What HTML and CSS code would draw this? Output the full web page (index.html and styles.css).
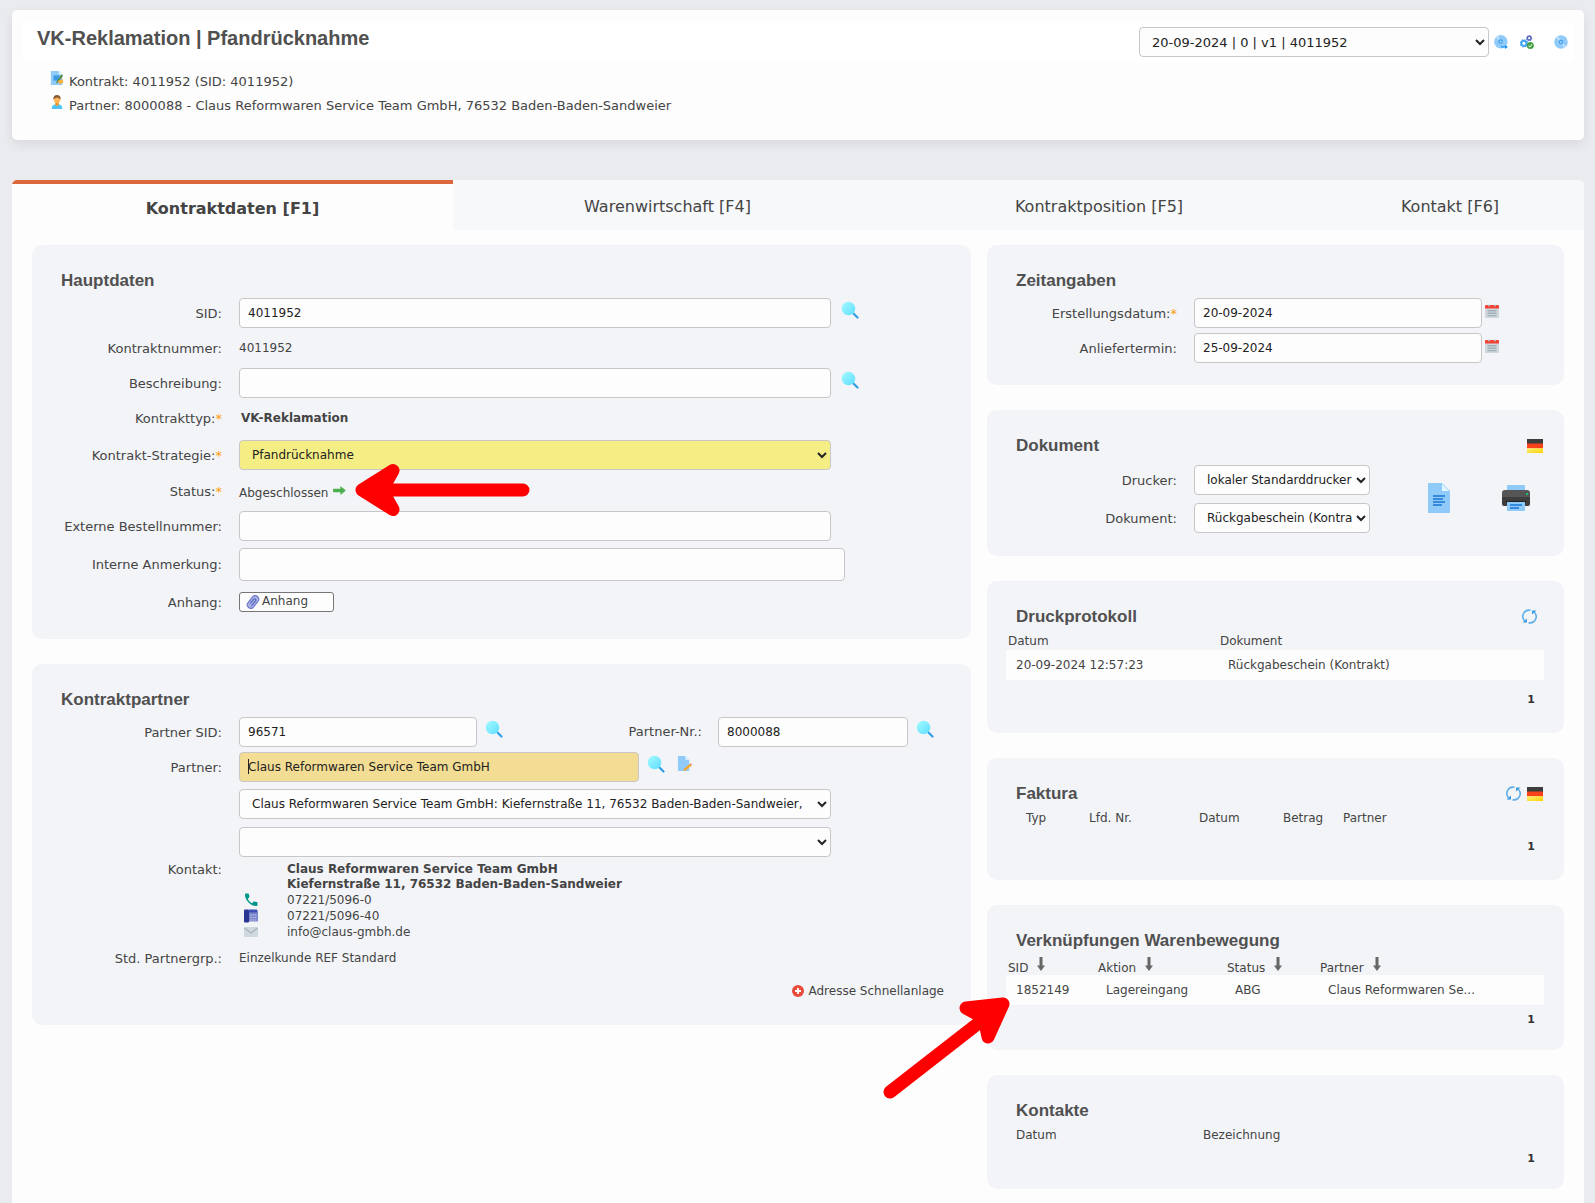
FILE: index.html
```html
<!DOCTYPE html>
<html lang="de">
<head>
<meta charset="utf-8">
<meta name="viewport" content="width=device-width, initial-scale=1">
<title>VK-Reklamation | Pfandrücknahme</title>
<link rel="stylesheet" href="styles.css">
</head>
<body>
<svg class="sprite" aria-hidden="true">
  <defs>
    <linearGradient id="lens" x1="0" y1="0" x2="1" y2="1"><stop offset="0" stop-color="#a4fbff"/><stop offset="1" stop-color="#5fdcff"/></linearGradient>
    <linearGradient id="gold" x1="0" y1="0" x2="1" y2="1"><stop offset="0" stop-color="#fff27a"/><stop offset="1" stop-color="#ffcf00"/></linearGradient>
    <symbol id="i-search" viewBox="0 0 18 18"><path d="M11.500 11.500l5 5" stroke="#2f9fe6" stroke-width="2.200" stroke-linecap="round"/><circle cx="7.500" cy="7.500" r="6.800" fill="url(#lens)"/></symbol>
    <symbol id="i-contract" viewBox="0 0 16 16"><path d="M1 0h9l4 4v12H1z" fill="#90caf9"/><path d="M10 0l4 4h-4z" fill="#e1f5fe"/><path d="M4 5h7v6H4z" fill="#3d9ae8"/><path d="M13 4l2 1.500-6 8-2 .5.500-2z" fill="#5b8a3c"/><path d="M9 11l6-1.500v4l-4 1.500z" fill="#fbb03b"/></symbol>
    <symbol id="i-person" viewBox="0 0 16 16"><path d="M2 16c0-4 2-5.500 6-5.500s6 1.500 6 5.500z" fill="#4fc3f7"/><path d="M6 8h4v3l-2 2-2-2z" fill="#f29a2e"/><circle cx="8" cy="5" r="3.800" fill="#ffb75a"/><path d="M3.800 5C3.500 1.500 5.500 0 8 0s4.500 1.500 4.200 5C11 3.500 9 3 8 3S5 3.500 3.800 5z" fill="#8a5a35"/></symbol>
    <symbol id="i-disc" viewBox="0 0 16 16"><circle cx="8" cy="8" r="7.800" fill="#90caf9"/><path d="M8 8L2 3.500A7.500 7.500 0 0 1 5 1zM8 8l6 4.500A7.500 7.500 0 0 1 11 15z" fill="#bbdefb"/><circle cx="8" cy="8" r="2.600" fill="#42a0ee"/><circle cx="8" cy="8" r="1" fill="#d5ecff"/></symbol>
    <symbol id="i-disc-go" viewBox="0 0 16 16"><circle cx="7.800" cy="7.800" r="7.700" fill="#90caf9"/><path d="M7.500 7.500L2 3.200A7.300 7.300 0 0 1 5 .700z" fill="#bbdefb"/><circle cx="7.500" cy="7.500" r="2.600" fill="#42a0ee"/><circle cx="7.500" cy="7.500" r="1" fill="#d5ecff"/><path d="M8 12.800h4.500V11l3.500 2.800-3.500 2.200v-1.700H8z" fill="#2196f3"/></symbol>
    <symbol id="i-gears" viewBox="0 0 16 16"><circle cx="4.500" cy="9.500" r="3" fill="none" stroke="#42a5f5" stroke-width="2.200"/><circle cx="4.500" cy="9.500" r="4.200" fill="none" stroke="#42a5f5" stroke-width="1.200" stroke-dasharray="1.650 1.650"/><circle cx="10.500" cy="3.600" r="2.100" fill="none" stroke="#5c6bc0" stroke-width="1.800"/><circle cx="10.500" cy="3.600" r="3.100" fill="none" stroke="#5c6bc0" stroke-width="1" stroke-dasharray="1.200 1.200"/><circle cx="11.800" cy="12" r="4" fill="#43a047"/><path d="M9.800 12l1.500 1.500 2.600-2.800" fill="none" stroke="#dcedc8" stroke-width="1.200"/></symbol>
    <symbol id="i-go" viewBox="0 0 14 12"><path d="M0 4.200h8V1l6 5-6 5V7.800H0z" fill="#4caf50"/></symbol>
    <symbol id="i-clip" viewBox="0 0 14 14"><g transform="rotate(38 7 7)"><rect x="3.500" y="0" width="7" height="14" rx="3.500" fill="#a9b3e8" stroke="#6f7ccb" stroke-width="1.200"/><path d="M5.800 10V4.500a1.200 1.200 0 0 1 2.400 0V11" fill="none" stroke="#5c6bc0" stroke-width="1.200"/></g></symbol>
    <symbol id="i-edit" viewBox="0 0 16 16"><path d="M1 0h8l4 4v12H1z" fill="#90caf9"/><path d="M9 0l4 4H9z" fill="#e1f5fe"/><path d="M13.500 8.500l1.800 1.800-6 5-2.300.700.500-2.300z" fill="#f5a623"/><path d="M13.500 8.500l1-.8 1.500 1.500-.7 1.100z" fill="#e57373"/></symbol>
    <symbol id="i-calendar" viewBox="0 0 14 14"><path d="M0 4h14v10H0z" fill="#cfd8dc"/><path d="M0 4.500V2a1 1 0 0 1 1-1h12a1 1 0 0 1 1 1v2.500z" fill="#f44336"/><circle cx="4" cy="1.500" r="1" fill="#b0bec5"/><circle cx="10" cy="1.500" r="1" fill="#b0bec5"/><path d="M2.500 6.800h9M2.500 9.200h9M2.500 11.600h9" stroke="#9fb0b8" stroke-width="1.400"/></symbol>
    <symbol id="i-flag" viewBox="0 0 16 14"><path d="M0 0h16v5H0z" fill="#3c3c3c"/><path d="M0 4.500h16v5H0z" fill="#f9411c"/><path d="M0 9.200h16V14H0z" fill="url(#gold)"/></symbol>
    <symbol id="i-doc" viewBox="0 0 22 30"><path d="M0 0h14l8 8v22H0z" fill="#90caf9"/><path d="M14 1l7 7h-7z" fill="#e1f5fe"/><path d="M5 13h12M5 16h10M5 19h12M5 22h9" stroke="#1976d2" stroke-width="1.500"/></symbol>
    <symbol id="i-printer" viewBox="0 0 28 26"><path d="M5 0h18v7H5z" fill="#90caf9"/><path d="M3 5h22a3 3 0 0 1 3 3v5H0V8a3 3 0 0 1 3-3z" fill="#555"/><path d="M0 12h28v7a2 2 0 0 1-2 2H2a2 2 0 0 1-2-2z" fill="#3d3d3d"/><circle cx="25" cy="9" r="1" fill="#00e676"/><path d="M4 16h20v2H4z" fill="#222"/><path d="M5 17h18v9H5z" fill="#90caf9"/><path d="M8 20h12M8 23h9" stroke="#1976d2" stroke-width="1.300"/></symbol>
    <symbol id="i-refresh" viewBox="0 0 15 15"><path d="M8.500 1.300A6.200 6.200 0 0 0 3 12M6.500 13.700A6.200 6.200 0 0 0 12 3" fill="none" stroke="#5fb0ea" stroke-width="1.600"/><path d="M.5 13.500h4.500V9.500zM14.500 1.500H10v4z" fill="#3a9be0"/></symbol>
    <symbol id="i-phone" viewBox="0 0 14 14"><path d="M1 1.500C1 .8 1.500.5 2 .5h2c.6 0 .9.300 1 .9l.400 2.200c0 .4-.1.700-.4 1L3.800 6c1 1.900 2.300 3.200 4.200 4.200l1.400-1.300c.3-.3.600-.4 1-.3l2.300.4c.5.100.8.400.8 1v2c0 .700-.4 1-1 1C6.500 13 1 7.500 1 1.500z" fill="#009688"/></symbol>
    <symbol id="i-fax" viewBox="0 0 14 13"><path d="M3 1h11v11H3z" fill="#7986cb"/><path d="M5 0h8v3H5z" fill="#3f51b5"/><rect x="0" y="0" width="5" height="13" rx="1" fill="#283593"/><path d="M6.500 5.500h6M6.500 8h6M6.500 10.500h6" stroke="#c5cae9" stroke-width="1.200" stroke-dasharray="1.400 .8"/></symbol>
    <symbol id="i-mail" viewBox="0 0 14 10"><rect width="14" height="10" rx="1" fill="#cfd8dc"/><path d="M.5 1L7 6l6.500-5" fill="none" stroke="#a3b2ba" stroke-width="1.200"/></symbol>
    <symbol id="i-plus" viewBox="0 0 12 12"><circle cx="6" cy="6" r="6" fill="#e74c3c"/><path d="M6 3v6M3 6h6" stroke="#fff" stroke-width="1.800"/></symbol>
    <symbol id="i-sort" viewBox="0 0 8 14"><path d="M2.500 0h3v8.500H8L4 14 0 8.500h2.500z" fill="#666"/></symbol>
  </defs>
</svg>

<header class="top">
  <div class="top-bar">
    <h1>VK-Reklamation | Pfandrücknahme</h1>
    <div class="top-tools">
      <select class="control" aria-label="Version"><option>20-09-2024 | 0 | v1 | 4011952</option></select>
      <button class="icon-btn" aria-label="Speichern und weiter"><svg class="i14"><use href="#i-disc-go"/></svg></button>
      <button class="icon-btn" aria-label="Verarbeiten"><svg class="i14"><use href="#i-gears"/></svg></button>
      <button class="icon-btn save" aria-label="Speichern"><svg class="i14"><use href="#i-disc"/></svg></button>
    </div>
  </div>
  <p class="info"><svg class="i14"><use href="#i-contract"/></svg>Kontrakt: 4011952 (SID: 4011952)</p>
  <p class="info"><svg class="i14"><use href="#i-person"/></svg>Partner: 8000088 - Claus Reformwaren Service Team GmbH, 76532 Baden-Baden-Sandweier</p>
</header>

<main class="sheet">
  <nav class="tabs">
    <a class="tab active" href="#kontraktdaten">Kontraktdaten [F1]</a>
    <a class="tab" href="#warenwirtschaft">Warenwirtschaft [F4]</a>
    <a class="tab" href="#kontraktposition">Kontraktposition [F5]</a>
    <a class="tab" href="#kontakt">Kontakt [F6]</a>
  </nav>

  <div class="columns" id="kontraktdaten">
    <div class="column">
      <section class="panel">
        <div class="panel-head"><h2>Hauptdaten</h2></div>
        <div class="row">
          <label for="sid">SID:</label>
          <div class="field wide"><input class="control" id="sid" value="4011952"><button class="icon-btn lift" aria-label="SID suchen"><svg class="i18"><use href="#i-search"/></svg></button></div>
        </div>
        <div class="row"><span class="label">Kontraktnummer:</span><span>4011952</span></div>
        <div class="row">
          <label for="beschreibung">Beschreibung:</label>
          <div class="field wide"><input class="control" id="beschreibung"><button class="icon-btn lift" aria-label="Beschreibung suchen"><svg class="i18"><use href="#i-search"/></svg></button></div>
        </div>
        <div class="row"><span class="label">Kontrakttyp:<i>*</i></span><b class="type">VK-Reklamation</b></div>
        <div class="row tall">
          <label for="strategie">Kontrakt-Strategie:<i>*</i></label>
          <div class="field wide"><select class="control yellow" id="strategie"><option>Pfandrücknahme</option></select></div>
        </div>
        <div class="row">
          <span class="label">Status:<i>*</i></span>
          <div class="status">Abgeschlossen <button class="icon-btn" aria-label="Nächster Status"><svg class="i-go"><use href="#i-go"/></svg></button>
            <svg class="pointer-left" viewBox="0 0 176 54" aria-hidden="true"><path d="M7 27L38 7.500 27 27 38 46.500zM7 27H168"/></svg>
          </div>
        </div>
        <div class="row">
          <label for="extern">Externe Bestellnummer:</label>
          <div class="field wide"><input class="control" id="extern"></div>
        </div>
        <div class="row note">
          <label for="anmerkung">Interne Anmerkung:</label>
          <div class="field wider"><textarea class="control" id="anmerkung" rows="1"></textarea></div>
        </div>
        <div class="row"><span class="label">Anhang:</span><div class="field"><button class="attach"><svg class="i14"><use href="#i-clip"/></svg>Anhang</button></div></div>
      </section>

      <section class="panel">
        <div class="panel-head"><h2>Kontraktpartner</h2></div>
        <div class="row">
          <label for="partner-sid">Partner SID:</label>
          <div class="field pair">
            <input class="control" id="partner-sid" value="96571">
            <div class="pair-mid"><button class="icon-btn lift" aria-label="Partner SID suchen"><svg class="i18"><use href="#i-search"/></svg></button><label for="partner-nr">Partner-Nr.:</label></div>
            <input class="control" id="partner-nr" value="8000088">
            <button class="icon-btn lift near" aria-label="Partner-Nr. suchen"><svg class="i18"><use href="#i-search"/></svg></button>
          </div>
        </div>
        <div class="row">
          <label for="partner">Partner:</label>
          <div class="field partner">
            <input class="control amber" id="partner" value="Claus Reformwaren Service Team GmbH">
            <div class="actions lift near"><button class="icon-btn" aria-label="Partner suchen"><svg class="i18"><use href="#i-search"/></svg></button><button class="icon-btn" aria-label="Partner bearbeiten"><svg class="i15"><use href="#i-edit"/></svg></button></div>
          </div>
        </div>
        <div class="row tall"><span></span>
          <div class="field wide"><select class="control" aria-label="Adresse"><option>Claus Reformwaren Service Team GmbH: Kiefernstraße 11, 76532 Baden-Baden-Sandweier,</option></select></div>
        </div>
        <div class="row tall"><span></span>
          <div class="field wide"><select class="control" aria-label="Ansprechpartner"><option></option></select></div>
        </div>
        <div class="row contact">
          <span class="label">Kontakt:</span>
          <address>
            <span></span><b>Claus Reformwaren Service Team GmbH</b>
            <span></span><b>Kiefernstraße 11, 76532 Baden-Baden-Sandweier</b>
            <svg class="i14"><use href="#i-phone"/></svg><span>07221/5096-0</span>
            <svg class="i14"><use href="#i-fax"/></svg><span>07221/5096-40</span>
            <svg class="i14"><use href="#i-mail"/></svg><span>info@claus-gmbh.de</span>
          </address>
        </div>
        <div class="row"><span class="label">Std. Partnergrp.:</span><span>Einzelkunde REF Standard</span></div>
        <a class="quick" href="#adresse"><svg class="i12"><use href="#i-plus"/></svg>Adresse Schnellanlage</a>
      </section>
    </div>

    <div class="column">
      <section class="panel">
        <div class="panel-head"><h2>Zeitangaben</h2></div>
        <div class="row">
          <label for="erstellt">Erstellungsdatum:<i>*</i></label>
          <div class="field date"><input class="control" id="erstellt" value="20-09-2024"><button class="icon-btn" aria-label="Erstellungsdatum wählen"><svg class="i14"><use href="#i-calendar"/></svg></button></div>
        </div>
        <div class="row">
          <label for="termin">Anliefertermin:</label>
          <div class="field date"><input class="control" id="termin" value="25-09-2024"><button class="icon-btn" aria-label="Anliefertermin wählen"><svg class="i14"><use href="#i-calendar"/></svg></button></div>
        </div>
      </section>

      <section class="panel">
        <div class="panel-head"><h2>Dokument</h2><button class="icon-btn" aria-label="Sprache Deutsch"><svg class="i-flag"><use href="#i-flag"/></svg></button></div>
        <div class="print">
          <div>
            <div class="row tall"><label for="drucker">Drucker:</label><select class="control" id="drucker"><option>lokaler Standarddrucker</option></select></div>
            <div class="row tall"><label for="dokument">Dokument:</label><select class="control" id="dokument"><option>Rückgabeschein (Kontrakt)</option></select></div>
          </div>
          <div class="print-actions">
            <button class="icon-btn" aria-label="Vorschau"><svg class="i-doc"><use href="#i-doc"/></svg></button>
            <button class="icon-btn" aria-label="Drucken"><svg class="i-printer"><use href="#i-printer"/></svg></button>
          </div>
        </div>
      </section>

      <section class="panel">
        <div class="panel-head"><h2>Druckprotokoll</h2><button class="icon-btn inset" aria-label="Aktualisieren"><svg class="i15"><use href="#i-refresh"/></svg></button></div>
        <table class="list log">
          <thead><tr><th class="c-date">Datum</th><th>Dokument</th></tr></thead>
          <tbody><tr><td>20-09-2024 12:57:23</td><td>Rückgabeschein (Kontrakt)</td></tr></tbody>
        </table>
        <div class="pager">1</div>
      </section>

      <section class="panel">
        <div class="panel-head"><h2>Faktura</h2><button class="icon-btn" aria-label="Aktualisieren"><svg class="i15"><use href="#i-refresh"/></svg></button><button class="icon-btn" aria-label="Sprache Deutsch"><svg class="i-flag"><use href="#i-flag"/></svg></button></div>
        <table class="list invoices">
          <thead><tr><th class="c-typ">Typ</th><th class="c-nr">Lfd. Nr.</th><th class="c-day">Datum</th><th class="c-sum">Betrag</th><th>Partner</th></tr></thead>
        </table>
        <div class="pager">1</div>
      </section>

      <section class="panel">
        <div class="panel-head"><h2>Verknüpfungen Warenbewegung</h2></div>
        <table class="list links">
          <thead><tr><th class="c-sid">SID<svg class="i-sort"><use href="#i-sort"/></svg></th><th class="c-act">Aktion<svg class="i-sort"><use href="#i-sort"/></svg></th><th class="c-stat">Status<svg class="i-sort"><use href="#i-sort"/></svg></th><th>Partner<svg class="i-sort"><use href="#i-sort"/></svg></th></tr></thead>
          <tbody><tr><td>1852149</td><td>Lagereingang</td><td>ABG</td><td>Claus Reformwaren Se...</td></tr></tbody>
        </table>
        <div class="pager short">1</div>
        <svg class="pointer-up" viewBox="0 0 130 110" aria-hidden="true"><path d="M120 11L83 15 101 25 105 44zM120 11L7 99"/></svg>
      </section>

      <section class="panel">
        <div class="panel-head"><h2>Kontakte</h2></div>
        <table class="list contacts">
          <thead><tr><th class="c-when">Datum</th><th>Bezeichnung</th></tr></thead>
        </table>
        <div class="pager short">1</div>
      </section>
    </div>
  </div>
</main>
</body>
</html>
```
FILE: styles.css
```css
* {
  box-sizing: border-box;
}

body {
  display: flex;
  flex-direction: column;
  min-height: 100vh;
  margin: 0;
  padding: 10px 11px 0 12px;
  background: #eaebef;
  color: #444;
  font-family: Verdana, "DejaVu Sans", sans-serif;
  font-size: 12px;
  line-height: 15px;
}

.sprite {
  position: absolute;
  width: 0;
  height: 0;
}

svg {
  display: block;
  flex: none;
}

.i12 { width: 12px; height: 12px; }
.i14 { width: 14px; height: 14px; }
.i15 { width: 15px; height: 15px; }
.i18 { width: 18px; height: 18px; }
.i-go { width: 13px; height: 11px; }
.i-flag { width: 16px; height: 14px; }
.i-doc { width: 22px; height: 30px; }
.i-printer { width: 28px; height: 26px; }

.icon-btn {
  flex: none;
  padding: 0;
  border: 0;
  background: none;
  cursor: pointer;
}

/* Header */
.top {
  height: 130px;
  padding: 12px 10px;
  border-radius: 5px;
  background: #fdfdfd;
  box-shadow: 0 4px 12px rgba(0, 0, 0, 0.08);
}

.top-bar {
  display: flex;
  justify-content: space-between;
  height: 40px;
  margin-bottom: 8px;
  padding: 5px 6px 5px 15px;
  border-radius: 5px;
  background: #fff;
}

h1,
h2 {
  margin: 0;
  color: #505050;
  font-family: Arial, "Liberation Sans", sans-serif;
}

h1 {
  font-size: 20px;
  line-height: 22px;
}

h2 {
  margin-right: auto;
  font-size: 17px;
  line-height: 20px;
}

.top-tools {
  display: flex;
  align-items: center;
  gap: 12px;
}

.top-tools .control {
  width: 350px;
  margin-right: -7px;
  font-size: 13px;
}

.top-tools .save {
  margin-left: 8px;
}

.info {
  display: flex;
  align-items: center;
  gap: 5px;
  margin: 0;
  padding-left: 28px;
  font-size: 13px;
  line-height: 24px;
}

.info svg {
  margin-bottom: 8px;
}

/* Tabs */
.sheet {
  flex: 1;
  margin-top: 40px;
  border-radius: 5px 5px 0 0;
  background: #fdfdfd;
  overflow: hidden;
}

.tabs {
  display: grid;
  grid-template-columns: 441fr 429fr 434fr 268fr;
}

.tab {
  height: 50px;
  background: #f7f8fa;
  color: #444;
  font-size: 16px;
  line-height: 54px;
  text-align: center;
  text-decoration: none;
}

.tab.active {
  border-top: 4px solid #dc673c;
  background: #fdfdfd;
  font-weight: bold;
  line-height: 50px;
}

/* Panels */
.columns {
  display: grid;
  grid-template-columns: minmax(0, 939fr) minmax(0, 577fr);
  gap: 16px;
  align-items: start;
  padding: 15px 20px 14px;
}

.column {
  display: grid;
  gap: 25px;
}

.panel {
  position: relative;
  padding-bottom: 19px;
  border-radius: 10px;
  background: #f3f4f8;
}

.panel-head {
  display: flex;
  align-items: center;
  gap: 6px;
  height: 51px;
  padding: 20px 21px 0 29px;
}

.panel-head .inset {
  margin-right: 6px;
}

.row {
  display: grid;
  grid-template-columns: 190px minmax(0, 1fr);
  column-gap: 17px;
  align-items: center;
  min-height: 35px;
}

.row.tall {
  min-height: 38px;
}

.row.note {
  min-height: 41px;
}

label,
.label {
  font-size: 13px;
  text-align: right;
}

label i,
.label i {
  color: #ff9c07;
  font-style: normal;
}

.control {
  width: 100%;
  height: 30px;
  padding: 0 8px;
  border: 1px solid #c8c6c7;
  border-radius: 4px;
  outline: 0;
  background: #fdfdfd;
  color: #222;
  font-family: inherit;
  font-size: 12px;
}

select.control {
  padding-right: 0;
}

textarea.control {
  height: 33px;
  resize: none;
}

.control.yellow {
  background: #f5ee84;
}

.control.amber {
  background: linear-gradient(#222, #222) 8px center / 1px 15px no-repeat #f3dc93;
}

.field {
  display: grid;
  align-items: center;
  justify-items: start;
  padding-bottom: 2px;
}

.tall .field,
.note .field {
  padding-bottom: 0;
}

.field.wide {
  grid-template-columns: 592fr 140fr;
}

.field.wider {
  grid-template-columns: 606fr 126fr;
}

.field.pair {
  grid-template-columns: 238fr 241fr 190fr 63fr;
}

.field.partner {
  grid-template-columns: 400fr 332fr;
}

.field.date {
  grid-template-columns: 288fr 82fr;
}

.field > .control {
  min-width: 0;
}

.field > .icon-btn {
  margin-left: 10px;
}

.field.date > .icon-btn {
  margin: 0 0 4px 3px;
}

.field > .near {
  margin-left: 8px;
}

.lift {
  margin-bottom: 6px;
}

.pair-mid {
  display: flex;
  align-items: center;
  justify-content: space-between;
  width: 100%;
  padding: 0 16px 0 8px;
}

.actions {
  display: flex;
  gap: 12px;
}

.type {
  padding-left: 2px;
}

.status {
  position: relative;
  display: flex;
  align-items: center;
  gap: 5px;
  padding-top: 4px;
}

.status .icon-btn {
  margin-bottom: 6px;
}

.attach {
  display: flex;
  align-items: center;
  gap: 2px;
  width: 95px;
  height: 20px;
  padding: 0 6px;
  border: 1px solid #767676;
  border-radius: 3px;
  background: #fdfdfd;
  color: #444;
  font: inherit;
}

.row.contact {
  align-items: start;
  height: 80px;
  padding-top: 1px;
}

address {
  display: grid;
  grid-template-columns: 48px 1fr;
  grid-template-rows: 15px 15px 16px 16px 16px;
  align-items: center;
  font-style: normal;
}

address svg {
  margin-left: 5px;
}

.quick {
  display: flex;
  align-items: center;
  justify-content: flex-end;
  gap: 5px;
  height: 30px;
  padding-right: 27px;
  color: #444;
  text-decoration: none;
}

/* Print panel */
.print {
  display: grid;
  grid-template-columns: 383fr 194fr;
}

.print-actions {
  display: flex;
  align-items: center;
  gap: 52px;
  padding: 0 0 3px 58px;
}

/* Lists */
.list {
  width: calc(100% - 39px);
  margin-left: 19px;
  border-collapse: collapse;
  table-layout: fixed;
}

.list th {
  height: 18px;
  padding: 0 2px;
  font-weight: normal;
  text-align: left;
  white-space: nowrap;
}

.list td {
  height: 30px;
  padding: 0 10px;
  background: #fdfdfd;
}

.list.links th {
  height: 19px;
  padding-top: 4px;
  line-height: 14px;
}

.list.invoices th {
  padding-left: 20px;
}

.list.contacts th {
  padding-left: 10px;
}

.i-sort {
  display: inline-block;
  width: 8px;
  height: 14px;
  margin: -6px 0 0 9px;
  vertical-align: 1px;
}

.c-date { width: 212px; }
.c-typ { width: 63px; }
.c-nr { width: 110px; }
.c-day { width: 84px; }
.c-sum { width: 60px; }
.c-sid { width: 90px; }
.c-act { width: 129px; }
.c-stat { width: 93px; }
.c-when { width: 187px; }

.pager {
  height: 34px;
  padding: 12px 29px 0 0;
  color: #333;
  font-size: 11px;
  font-weight: bold;
  text-align: right;
}

.pager.short {
  height: 26px;
  padding-top: 7px;
}

/* Red pointer marks over the form */
.pointer-left,
.pointer-up {
  position: absolute;
  z-index: 2;
  fill: #f00;
  stroke: #f00;
  stroke-width: 13px;
  stroke-linecap: round;
  stroke-linejoin: round;
  pointer-events: none;
}

.pointer-left {
  top: -18px;
  left: 116px;
  width: 176px;
  height: 54px;
}

.pointer-up {
  top: 88px;
  left: -104px;
  width: 130px;
  height: 110px;
}
```
